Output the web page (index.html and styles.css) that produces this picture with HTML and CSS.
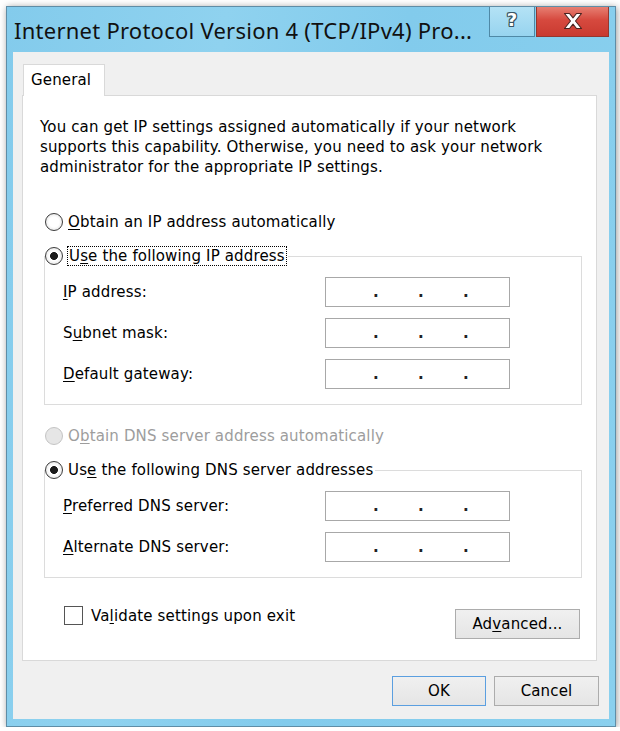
FILE: index.html
```html
<!DOCTYPE html>
<html lang="en">
<head>
  <meta charset="UTF-8" />
  <meta name="viewport" content="width=device-width, initial-scale=1.0" />
  <title>Internet Protocol Version 4 (TCP/IPv4) Properties</title>
  <link rel="stylesheet" href="styles.css">
</head>
<body>
  <div class="window">
    <div class="titlebar">
      <div class="title">Internet Protocol Version 4 (TCP/IPv4) Pro...</div>
      <div class="caption">
        <div class="cap-btn help"><span class="glyph">?</span></div>
        <div class="cap-btn close">
          <svg width="22" height="18" viewBox="0 0 22 18">
            <path d="M2.5 1.5h5l3.5 4.3 3.5-4.3h5l-6 7.5 6 7.5h-5L11 12.2 7.5 16.5h-5l6-7.5z" fill="#fff" stroke="#4a2320" stroke-width="1.1" stroke-linejoin="round"/>
          </svg>
        </div>
      </div>
    </div>

    <div class="client">
      <div class="tabs">
        <div class="tab">General</div>
      </div>
      <div class="panel">
        <p class="intro">You can get IP settings assigned automatically if your network<br>supports this capability. Otherwise, you need to ask your network<br>administrator for the appropriate IP settings.</p>

        <div class="radio-row first">
          <span class="radio"></span>
          <span><u>O</u>btain an IP address automatically</span>
        </div>

        <fieldset class="group">
          <legend class="radio-row">
            <span class="radio checked"></span>
            <span class="focus">U<u>s</u>e the following IP address</span>
          </legend>
          <div class="fields">
            <div class="field">
              <span class="label"><u>I</u>P address:</span>
              <div class="ip"><span>.</span><span>.</span><span>.</span></div>
            </div>
            <div class="field">
              <span class="label">S<u>u</u>bnet mask:</span>
              <div class="ip"><span>.</span><span>.</span><span>.</span></div>
            </div>
            <div class="field">
              <span class="label"><u>D</u>efault gateway:</span>
              <div class="ip"><span>.</span><span>.</span><span>.</span></div>
            </div>
          </div>
        </fieldset>

        <div class="radio-row disabled">
          <span class="radio"></span>
          <span>O<u>b</u>tain DNS server address automatically</span>
        </div>

        <fieldset class="group">
          <legend class="radio-row">
            <span class="radio checked"></span>
            <span>Us<u>e</u> the following DNS server addresses</span>
          </legend>
          <div class="fields">
            <div class="field">
              <span class="label"><u>P</u>referred DNS server:</span>
              <div class="ip"><span>.</span><span>.</span><span>.</span></div>
            </div>
            <div class="field">
              <span class="label"><u>A</u>lternate DNS server:</span>
              <div class="ip"><span>.</span><span>.</span><span>.</span></div>
            </div>
          </div>
        </fieldset>

        <div class="options">
          <div class="check">
            <span class="box"></span>
            <span>Va<u>l</u>idate settings upon exit</span>
          </div>
          <div class="btn advanced">Ad<u>v</u>anced...</div>
        </div>
      </div>

      <div class="footer">
        <div class="btn ok">OK</div>
        <div class="btn cancel">Cancel</div>
      </div>
    </div>
  </div>
</body>
</html>
```

FILE: styles.css
```css
body {
  margin: 0;
  background: #fff;
  font-family: "DejaVu Sans", sans-serif;
  font-size: 15px;
  letter-spacing: 0.15px;
  color: #000;
}
u {
  text-decoration-thickness: 1px;
  text-underline-offset: 2px;
}
.window {
  width: 608px;
  height: 719px;
  margin: 6px 0 0 6px;
  border: 1px solid #5f8da6;
  background: linear-gradient(100deg, #83cbec 0%, #8fd2ef 30%, #82cbec 55%, #8ad0ee 100%);
  box-shadow: 1px 1px 7px rgba(0, 0, 0, 0.4);
  display: flex;
  flex-direction: column;
}
.titlebar {
  height: 45px;
  display: flex;
  justify-content: space-between;
  align-items: flex-start;
}
.title {
  font-family: "Noto Sans", sans-serif;
  font-size: 22px;
  letter-spacing: 0.25px;
  line-height: 28px;
  padding: 9px 0 0 7px;
  white-space: nowrap;
  color: #111;
}
.caption {
  display: flex;
  gap: 1px;
  margin-right: 6px;
}
.cap-btn {
  height: 30px;
  display: flex;
  align-items: center;
  justify-content: center;
  box-sizing: border-box;
}
.help {
  width: 46px;
  background: linear-gradient(#b4e2f5, #97d4ef);
  border: 1px solid #4f89a6;
  border-top: none;
}
.glyph {
  font-family: "DejaVu Sans", sans-serif;
  font-weight: bold;
  font-size: 18px;
  line-height: 22px;
  margin-top: -4px;
  color: #fff;
  text-shadow: 1px 0 0 #3b5563, -1px 0 0 #3b5563, 0 1px 0 #3b5563, 0 -1px 0 #3b5563,
    1px 1px 0 #3b5563, -1px -1px 0 #3b5563, 1px -1px 0 #3b5563, -1px 1px 0 #3b5563;
}
.close {
  width: 73px;
  background: linear-gradient(#e77f72, #d6493e 45%, #c93a30);
  border: 1px solid #94372f;
  border-top: none;
}
.close svg {
  margin-top: -2px;
}
.client {
  flex: 1;
  margin: 0 6px 7px 6px;
  background: #f0f0f0;
  padding: 12px 12px 0 9px;
  display: flex;
  flex-direction: column;
}
.tabs {
  display: flex;
  height: 31px;
}
.tab {
  margin-left: 1px;
  width: 82px;
  height: 32px;
  box-sizing: border-box;
  border: 1px solid #d9d9d9;
  border-bottom: none;
  background: #fff;
  position: relative;
  z-index: 1;
  padding: 6px 0 0 7px;
}
.panel {
  height: 566px;
  box-sizing: border-box;
  border: 1px solid #d9d9d9;
  background: #fff;
  padding: 21px 14px 0 17px;
}
.intro {
  margin: 0;
  line-height: 20px;
}
.radio-row {
  display: flex;
  align-items: center;
  gap: 5px;
  height: 20px;
  margin-left: 5px;
}
.radio-row.first {
  margin-top: 35px;
}
.radio {
  width: 18px;
  height: 18px;
  box-sizing: border-box;
  border-radius: 50%;
  border: 1px solid #3c3c3c;
  background: radial-gradient(circle, #fff 0 5px, #ececec 8px);
}
.radio.checked {
  background: radial-gradient(circle, #1b1b1b 0 3.6px, #fff 4.3px 5px, #ececec 8px);
}
.disabled {
  color: #9d9d9d;
  margin-top: 21px;
}
.disabled .radio {
  border-color: #c4c4c4;
  background: #e6e6e6;
}
.group {
  margin: 14px 0 0 4px;
  padding: 0;
  border: 1px solid #dcdcdc;
}
.group legend {
  padding: 0 2px 0 0;
  margin-left: 0;
}
.focus {
  outline: 1px dotted #000;
  outline-offset: 0;
  padding: 0 1px;
}
.fields {
  display: flex;
  flex-direction: column;
  gap: 11px;
  padding: 11px 0 15px 18px;
}
.field {
  display: flex;
  align-items: center;
  height: 30px;
}
.label {
  width: 262px;
}
.ip {
  width: 185px;
  height: 30px;
  box-sizing: border-box;
  border: 1px solid #a8a8a8;
  background: #fff;
  display: flex;
  gap: 41px;
  padding: 5px 0 0 47px;
  color: #222;
  font-weight: bold;
}
.ip span {
  width: 4px;
  text-align: center;
}
.options {
  margin: 28px 2px 0 24px;
  display: flex;
  justify-content: space-between;
  align-items: flex-start;
}
.check {
  display: flex;
  align-items: center;
  gap: 8px;
  height: 19px;
}
.box {
  width: 19px;
  height: 19px;
  box-sizing: border-box;
  border: 1px solid #555;
  background: #fff;
}
.btn {
  height: 30px;
  box-sizing: border-box;
  border: 1px solid #acacac;
  background: linear-gradient(#f0f0f0, #e5e5e5);
  display: flex;
  align-items: center;
  justify-content: center;
}
.advanced {
  width: 125px;
  margin-top: 3px;
}
.footer {
  display: flex;
  justify-content: flex-end;
  gap: 8px;
  margin-top: 15px;
  margin-right: -2px;
}
.ok {
  width: 94px;
  border-color: #5b9fe0;
}
.cancel {
  width: 105px;
}
```
